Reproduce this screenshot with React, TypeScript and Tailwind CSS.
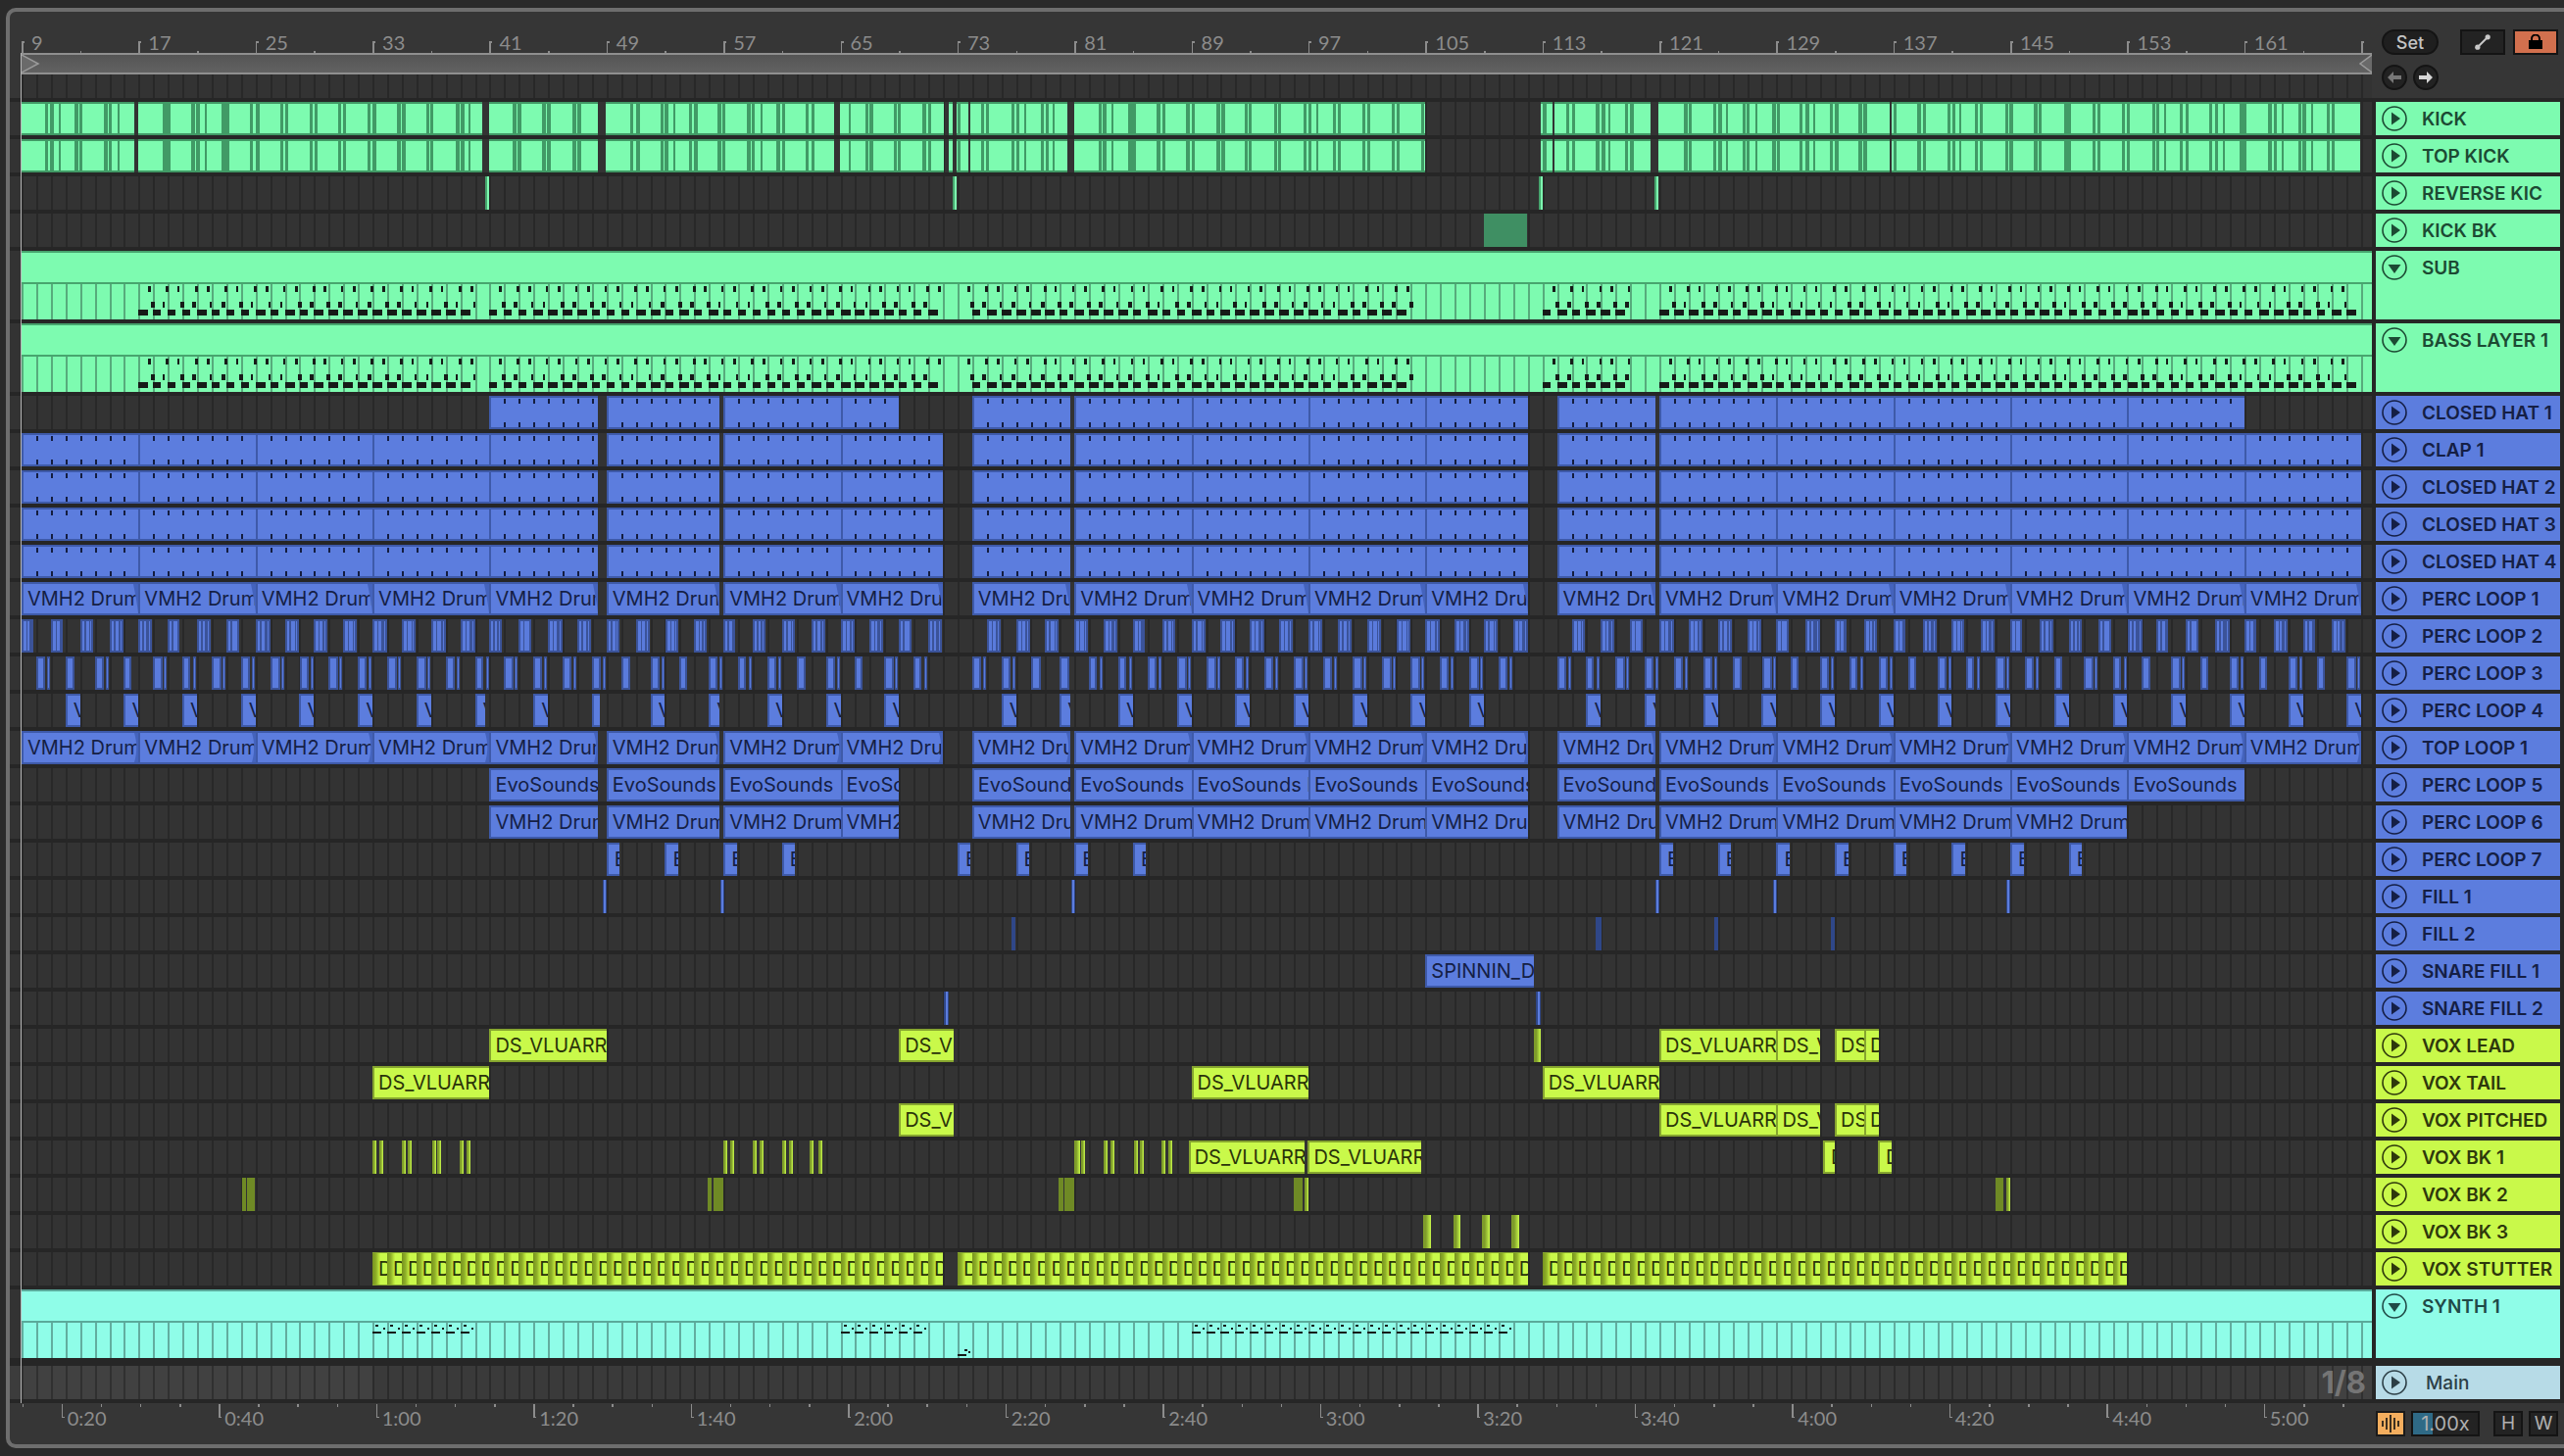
import React from "react";

const B = 14.92;
const K = (k: number) => 22 + k * B;
const rnd = (i: number) => Math.abs(Math.sin(i * 12.9898) * 43758.5453) % 1;
const range = (a: number, b: number, s = 1) => {
  const out: number[] = [];
  for (let i = a; i <= b; i += s) out.push(i);
  return out;
};
type Seg = [number, number];
const inSegs = (x: number, w: number, segs: Seg[], m = 0) =>
  segs.some(([a, b]) => x >= a + m && x + w <= b - m);

const TONES: Record<string, string> = {
  green: "bg-[#7dfbb0] border-y-2 border-[#419a66]",
  greenThin: "bg-[linear-gradient(90deg,#47a56e_50%,#7dfbb0_50%)]",
  greenDark: "bg-[#3f8f63]",
  blue: "bg-[#5c7dde] border-y-2 border-l-2 border-[#3e5aa9] text-[#151f45]",
  blueThin: "bg-[linear-gradient(90deg,#2f4788_30%,#5c7dde_30%,#5c7dde_70%,#2f4788_70%)]",
  blueDark: "bg-[#2f4788]",
  lime: "bg-[#c9f94a] border-y-2 border-l-2 border-[#86a52f] text-[#2a3309]",
  limeThin: "bg-[linear-gradient(90deg,#7e9c2a_35%,#c9f94a_100%)]",
  olive: "bg-[#6f8a25]",
  tile: "bg-[linear-gradient(90deg,#76921f_0%,#8fb028_25%,#b4dc38_42%,#c9f94a_55%,#c9f94a_100%)] border-y border-[#86a52f] text-[#2a3309]",
};

function Clip({
  a,
  b,
  tone,
  label,
  wedge,
  inset,
}: {
  a: number;
  b: number;
  tone: string;
  label?: string;
  wedge?: string;
  inset?: boolean;
}) {
  return (
    <div
      className={`absolute top-0 bottom-0 flex items-center overflow-hidden whitespace-nowrap font-['Inter',sans-serif] text-[20px] ${
        inset ? "pl-[6px]" : "pl-[4px]"
      } ${TONES[tone]}`}
      style={{ left: a - 22, width: b - a }}
    >
      {wedge && (
        <svg className="absolute right-0 top-0 h-full w-[6px]" viewBox="0 0 6 30" preserveAspectRatio="none">
          <path d={wedge === "curve" ? "M6 0 L2 0 C5 10 5 20 2 30 L6 30 Z" : "M6 0 L1 0 C3 10 5 20 6 30 Z"} fill="#4463bd" />
        </svg>
      )}
      {label}
    </div>
  );
}

function Overlay({ h, d, fill }: { h: number; d: string; fill: string }) {
  return (
    <svg className="absolute left-0 top-0" width={2398} height={h} shapeRendering="crispEdges">
      <path d={d} fill={fill} />
    </svg>
  );
}

const box = (x: number, y: number, w: number, h: number) => `M${(x - 22).toFixed(1)} ${y}h${w}v${h}h${-w}z`;

const KICK_SEGS: Seg[] = [
  [22, 137], [141, 492], [499, 610], [618, 850.6], [857, 963], [968.4, 972], [976, 988], [990, 1088.6],
  [1096, 1454], [1572, 1584], [1586, 1684], [1692, 1928], [1930, 2408],
];
const kickStripes = () => {
  let d = "";
  range(0, 160, 2).forEach((k) => {
    [24, 29].forEach((o, j) => {
      const w = 3 + (rnd(k * 3 + j) > 0.6 ? 1 : 0);
      const off = o + (rnd(k + j * 7) > 0.5 ? 1 : 0);
      const x = K(k) + off;
      if (inSegs(x, w, KICK_SEGS, 1)) d += box(x, 2, w, 30);
    });
    if (rnd(k + 211) > 0.7) {
      const x = K(k) + 8;
      if (inSegs(x, 2, KICK_SEGS, 1)) d += box(x, 2, 2, 30);
    }
  });
  return d;
};

function KickRow() {
  return (
    <>
      {KICK_SEGS.map(([a, b]) => (
        <Clip key={a} a={a} b={b} tone="green" />
      ))}
      <Overlay h={34} d={kickStripes()} fill="#419a66" />
    </>
  );
}

const NOTE_SEGS: Seg[] = [[141, 492], [498, 962], [977, 1448], [1572, 1670], [1692, 2406]];
const notesPath = () => {
  let d = "";
  range(8, 160).forEach((k) => {
    const x = K(k);
    const w3 = rnd(k) > 0.5 ? 10 : 8;
    if (inSegs(x, w3, NOTE_SEGS)) d += box(x, 26, w3, 6);
    if (k % 2 === 0) {
      const thick1 = rnd(k + 50) > 0.45 ? 3 : 2;
      const thick2 = rnd(k + 90) > 0.45 ? 3 : 2;
      if (inSegs(x + 10, thick1, NOTE_SEGS)) d += box(x + 10, 2, thick1, 6);
      if (inSegs(x + 28, thick2, NOTE_SEGS)) d += box(x + 28, 2, thick2, 6);
      const w4 = rnd(k + 130) > 0.35 ? 4 : 2;
      const w5 = rnd(k + 170) > 0.35 ? 4 : 2;
      if (inSegs(x + 13, w4, NOTE_SEGS)) d += box(x + 13, 18, w4, 6);
      if (inSegs(x + 25, w5, NOTE_SEGS)) d += box(x + 25, 18, w5, 6);
    }
  });
  return d;
};

const SYNTH_RANGES: Seg[] = [[380, 491], [856, 962], [1214, 1558]];
const synthPath = () => {
  let d = "";
  range(0, 160).forEach((k) => {
    const x = K(k);
    if (inSegs(x, 15, SYNTH_RANGES)) {
      d += box(x, 9, 9, 2);
      d += box(x + 3, 2, 3, 2);
      d += box(x + 11, 5, 2, 2);
    }
  });
  d += box(977, 32, 9, 2) + box(984, 27, 3, 2) + box(988, 29, 2, 2);
  return d;
};

const ALL_SEGS: Seg[] = [
  [0, 8], [8, 16], [16, 24], [24, 32], [32, 39.4], [40, 47.7], [48, 56], [56, 63], [65, 71.7], [72, 80], [80, 88],
  [88, 96], [96, 103], [105, 111.7], [112, 120], [120, 128], [128, 136], [136, 144], [144, 152], [152, 160],
];
const FROM32: Seg[] = ALL_SEGS.filter(([a]) => a >= 32).map(([a, b]) => (a === 56 ? [56, 60] : [a, b]) as Seg);

function tickPath(segs: Seg[]) {
  let d = "";
  const px: Seg[] = segs.map(([a, b]) => [K(a), K(b)]);
  range(0, 160).forEach((k) => {
    const x = K(k);
    if (inSegs(x, 2, px, 3)) d += box(x, 3, 2, 5) + box(x, 27, 2, 5);
  });
  return d;
}

function HatRow({ segs }: { segs: Seg[] }) {
  return (
    <>
      {segs.map(([a, b]) => (
        <Clip key={a} a={K(a)} b={K(b)} tone="blue" />
      ))}
      <Overlay h={34} d={tickPath(segs)} fill="#141d3f" />
    </>
  );
}

function TextRow({
  segs,
  label,
  wedge,
}: {
  segs: Seg[];
  label: (a: number) => string;
  wedge?: string;
}) {
  return (
    <>
      {segs.map(([a, b]) => (
        <Clip key={a} a={K(a)} b={K(b)} tone="blue" label={label(a)} wedge={wedge} />
      ))}
    </>
  );
}

const P2_STARTS = [...range(0, 62, 2), ...range(66, 102, 2), ...range(106, 158, 2)];
function Perc2() {
  let frame = "";
  let inner = "";
  P2_STARTS.forEach((k) => {
    const x = K(k);
    const w = 12 + Math.round(rnd(k) * 3);
    frame += box(x, 0, w, 34);
    inner += box(x + 2, 2, 2 + Math.round(rnd(k + 1)), 30);
    inner += box(x + 6, 2, 2 + Math.round(rnd(k + 2) * 2), 30);
    if (w > 12) inner += box(x + w - 3, 2, 1, 30);
  });
  return (
    <>
      <Overlay h={34} d={frame} fill="#3b5399" />
      <Overlay h={34} d={inner} fill="#5a7bdc" />
    </>
  );
}

const P3_STARTS = [...range(1, 61, 2), ...range(65, 101, 2), ...range(105, 159, 2)];
function Perc3() {
  let frame = "";
  let inner = "";
  P3_STARTS.forEach((k) => {
    const x = K(k);
    const w = 8 + Math.round(rnd(k + 3) * 2);
    frame += box(x, 0, w, 34);
    inner += box(x + 2, 2, w - 4, 30);
    if (rnd(k + 7) > 0.2) {
      frame += box(x + 11, 0, 3, 34);
      inner += box(x + 12, 2, 1, 30);
    }
  });
  return (
    <>
      <Overlay h={34} d={frame} fill="#3b5399" />
      <Overlay h={34} d={inner} fill="#5a7bdc" />
    </>
  );
}

const P4: Seg[] = [...range(3, 59, 4), ...range(67, 99, 4), ...range(107, 159, 4)].map((k) => {
  const end = k === 31 ? 31.7 : k === 39 ? 39.4 : k === 47 ? 47.7 : k === 71 ? 71.7 : k === 111 ? 111.7 : k + 1;
  return [k, end] as Seg;
});
const P7 = [40, 44, 48, 52, 64, 68, 72, 76, 112, 116, 120, 124, 128, 132, 136, 140];

const px = (list: Seg[], tone: string) => list.map(([a, b]) => <Clip key={a} a={a} b={b} tone={tone} />);

const VOXSET = (
  <>
    <Clip a={K(112)} b={K(120)} tone="lime" label="DS_VLUARR" />
    <Clip a={K(120)} b={K(123)} tone="lime" label="DS_V" />
    <Clip a={K(124)} b={K(126)} tone="lime" label="DS" />
    <Clip a={K(126)} b={K(127)} tone="lime" label="D" />
  </>
);

const BK1: Seg[] = [
  [380, 384], [386.6, 390], [410, 413], [416, 420], [440.6, 443], [446, 450], [469, 472], [476, 480],
  [738, 742], [744.6, 748], [768, 770], [775, 779], [798, 800], [804.5, 808], [826, 830], [834.6, 838],
  [1096, 1102], [1103, 1107], [1126, 1128.5], [1132.7, 1136], [1156.5, 1159], [1163, 1166], [1184.6, 1188], [1192.4, 1196],
];

const TILES = [...range(24, 62), ...range(64, 102), ...range(104, 143)];

type Row = { name: string; tone: "g" | "b" | "l" | "c"; content?: React.ReactNode; fold?: boolean };

const VMH = () => "VMH2 Drum";
const EVO = (a: number) => (a === 80 || a === 136 ? "EvoSounds P" : "EvoSounds");

const ROWS: Row[] = [
  { name: "KICK", tone: "g", content: <KickRow /> },
  { name: "TOP KICK", tone: "g", content: <KickRow /> },
  { name: "REVERSE KIC", tone: "g", content: px([[494.6, 498], [972, 976], [1570, 1572], [1688, 1692]], "greenThin") },
  { name: "KICK BK", tone: "g", content: px([[1514, 1558]], "greenDark") },
  { name: "SUB", tone: "g", fold: true },
  { name: "BASS LAYER 1", tone: "g", fold: true },
  { name: "CLOSED HAT 1", tone: "b", content: <HatRow segs={FROM32.filter(([a]) => a < 152)} /> },
  { name: "CLAP 1", tone: "b", content: <HatRow segs={ALL_SEGS} /> },
  { name: "CLOSED HAT 2", tone: "b", content: <HatRow segs={ALL_SEGS} /> },
  { name: "CLOSED HAT 3", tone: "b", content: <HatRow segs={ALL_SEGS} /> },
  { name: "CLOSED HAT 4", tone: "b", content: <HatRow segs={ALL_SEGS} /> },
  { name: "PERC LOOP 1", tone: "b", content: <TextRow segs={ALL_SEGS} label={VMH} wedge="corner" /> },
  { name: "PERC LOOP 2", tone: "b", content: <Perc2 /> },
  { name: "PERC LOOP 3", tone: "b", content: <Perc3 /> },
  {
    name: "PERC LOOP 4",
    tone: "b",
    content: P4.map(([a, b]) => <Clip key={a} a={K(a)} b={K(b)} tone="blue" label="V" inset />),
  },
  { name: "TOP LOOP 1", tone: "b", content: <TextRow segs={ALL_SEGS} label={VMH} wedge="curve" /> },
  { name: "PERC LOOP 5", tone: "b", content: <TextRow segs={FROM32.filter(([a]) => a < 152)} label={EVO} /> },
  { name: "PERC LOOP 6", tone: "b", content: <TextRow segs={FROM32.filter(([a]) => a < 144)} label={VMH} /> },
  {
    name: "PERC LOOP 7",
    tone: "b",
    content: P7.map((k) => <Clip key={k} a={K(k)} b={K(k) + 13.5} tone="blue" label="E" inset />),
  },
  { name: "FILL 1", tone: "b", content: [615, 735, 1093, 1689, 1809, 2047].map((x) => <Clip key={x} a={x} b={x + 3} tone="blueThin" />) },
  { name: "FILL 2", tone: "b", content: px([[1032, 1036], [1628, 1634], [1749, 1752], [1868, 1872]], "blueDark") },
  {
    name: "SNARE FILL 1",
    tone: "b",
    content: <Clip a={K(96)} b={1565} tone="blue" label="SPINNIN_D" />,
  },
  { name: "SNARE FILL 2", tone: "b", content: px([[962.6, 968], [1567, 1572]], "blueThin") },
  {
    name: "VOX LEAD",
    tone: "l",
    content: (
      <>
        <Clip a={K(32)} b={K(40)} tone="lime" label="DS_VLUARR" />
        <Clip a={K(60)} b={K(64) - 4} tone="lime" label="DS_V" />
        <Clip a={1564.5} b={1572} tone="limeThin" />
        {VOXSET}
      </>
    ),
  },
  {
    name: "VOX TAIL",
    tone: "l",
    content: [24, 80, 104].map((k) => <Clip key={k} a={K(k)} b={K(k + 8)} tone="lime" label="DS_VLUARR" />),
  },
  {
    name: "VOX PITCHED",
    tone: "l",
    content: (
      <>
        <Clip a={K(60)} b={K(64) - 4} tone="lime" label="DS_V" />
        {VOXSET}
      </>
    ),
  },
  {
    name: "VOX BK 1",
    tone: "l",
    content: (
      <>
        {px(BK1, "limeThin")}
        <Clip a={1212.7} b={1331.5} tone="lime" label="DS_VLUARR" />
        <Clip a={1334.4} b={1450} tone="lime" label="DS_VLUARR" />
        <Clip a={1860} b={1872} tone="lime" label="D" inset />
        <Clip a={1916} b={1930} tone="lime" label="D" inset />
      </>
    ),
  },
  {
    name: "VOX BK 2",
    tone: "l",
    content: (
      <>
        {px([[247, 250], [722, 726], [1080, 1085], [1320, 1328.6], [2036, 2044]], "olive")}
        {px([[252, 260], [728, 738], [1086, 1095.5]], "olive")}
        {px([[1330.5, 1334], [2047, 2050]], "limeThin")}
      </>
    ),
  },
  { name: "VOX BK 3", tone: "l", content: px([[1452, 1460], [1482.5, 1490], [1512, 1520], [1542, 1550]], "limeThin") },
  {
    name: "VOX STUTTER",
    tone: "l",
    content: TILES.map((k) => <Clip key={k} a={K(k)} b={K(k + 1)} tone="tile" label="D" inset />),
  },
  { name: "SYNTH 1", tone: "c", fold: true },
];

const PANEL: Record<string, string> = {
  g: "bg-[#7dfbb0] text-[#1c4a33]",
  b: "bg-[#5c7dde] text-[#151f45]",
  l: "bg-[#c9f94a] text-[#2e380c]",
  c: "bg-[#8ffde8] text-[#204a47]",
  m: "bg-[#b7dbe7] text-[#2d3f46]",
};

function RoundIcon({ down }: { down?: boolean }) {
  return (
    <svg width="26" height="26" viewBox="0 0 26 26" className="shrink-0">
      <circle cx="13" cy="13" r="12" fill="none" stroke="currentColor" strokeWidth="1.6" />
      {down ? <path d="M6.5 10h13L13 19z" fill="currentColor" /> : <path d="M10 6.5v13l9-6.5z" fill="currentColor" />}
    </svg>
  );
}

function Panel({ name, tone, fold, main }: { name: string; tone: string; fold?: boolean; main?: boolean }) {
  return (
    <div className={`flex w-[188px] shrink-0 items-start gap-[15px] overflow-hidden pl-[6px] pt-[4px] ${PANEL[tone]}`}>
      <RoundIcon down={fold} />
      <span
        className={`whitespace-nowrap font-['Inter',sans-serif] text-[19px] leading-[27px] ${
          main ? "ml-[4px] font-medium" : "font-semibold"
        }`}
      >
        {name}
      </span>
    </div>
  );
}

const GRID =
  "bg-[repeating-linear-gradient(90deg,#282828_0,#282828_2px,#333333_2px,#333333_14.92px)]";

function TrackRow({ row }: { row: Row }) {
  if (row.fold) {
    const cyan = row.tone === "c";
    return (
      <div className="flex h-[70px]">
        <div className="w-[12px] bg-[#333333]" />
        <div className="relative flex w-[2398px] flex-col">
          <div
            className={`h-[34px] border-t-2 border-b-2 ${
              cyan ? "border-[#5aa99a] bg-[#8ffde8]" : "border-[#47a56e] bg-[#7dfbb0]"
            }`}
          />
          <div
            className={`relative h-[36px] ${
              cyan
                ? "bg-[repeating-linear-gradient(90deg,#62ad9f_0,#62ad9f_2px,#8ffde8_2px,#8ffde8_14.92px)]"
                : "bg-[repeating-linear-gradient(90deg,#57ab7c_0,#57ab7c_2px,#7dfbb0_2px,#7dfbb0_14.92px)]"
            }`}
          >
            <Overlay h={36} d={cyan ? synthPath() : notesPath()} fill="#161b18" />
          </div>
        </div>
        <div className="w-[4px]" />
        <Panel name={row.name} tone={row.tone} fold />
      </div>
    );
  }
  return (
    <div className="flex h-[34px]">
      <div className="w-[12px] bg-[#333333]" />
      <div className={`relative w-[2398px] overflow-hidden ${GRID}`}>{row.content}</div>
      <div className="w-[4px]" />
      <Panel name={row.name} tone={row.tone} />
    </div>
  );
}

const BAR_LABELS = range(0, 19).map((i) => ({ k: i * 8, n: 9 + i * 8 }));
const TIMES = ["0:20","0:40","1:00","1:20","1:40","2:00","2:20","2:40","3:00","3:20","3:40","4:00","4:20","4:40","5:00"];

const RULER_TEXT = "font-['Lato',sans-serif] text-[20px] leading-[20px] text-[#8c8c8c]";

function TopRuler() {
  return (
    <div className="relative h-[42px] w-[2398px]">
      {BAR_LABELS.map(({ k, n }) => (
        <div key={k} className="absolute top-[23px]" style={{ left: k * B }}>
          <span className={`absolute left-[10px] top-0 -translate-y-[2px] ${RULER_TEXT}`}>{n}</span>
        </div>
      ))}
      {range(0, 20).map((i) => (
        <div
          key={i}
          className="absolute bottom-0 h-[12px] w-[1.5px] bg-[#8c8c8c]"
          style={{ left: i * 8 * B }}
        >
          <div className="absolute left-0 top-0 h-[1.5px] w-[3px] bg-[#8c8c8c]" />
        </div>
      ))}
      {range(0, 19).map((i) => (
        <div key={i} className="absolute bottom-0 h-[2px] w-[1.5px] bg-[#8c8c8c]" style={{ left: (i * 8 + 4) * B }} />
      ))}
    </div>
  );
}

function BottomRuler() {
  return (
    <div className="relative h-[42px] w-[2410px]">
      {range(0, 59).map((i) => (
        <div key={i} className="absolute top-[1px] h-[3px] w-[1.5px] bg-[#8c8c8c]" style={{ left: 12.5 + i * 40.13 }} />
      ))}
      {TIMES.map((t, i) => (
        <div key={t} className="absolute top-[1px] h-[14px] w-[1.5px] bg-[#8c8c8c]" style={{ left: 52.7 + i * 160.5 }}>
          <div className="absolute bottom-0 left-0 h-[1.5px] w-[3px] bg-[#8c8c8c]" />
          <span className={`absolute left-[6px] top-[4px] ${RULER_TEXT}`}>{t}</span>
        </div>
      ))}
    </div>
  );
}

export default function App() {
  return (
    <div className="relative h-[1486px] w-[2616px] overflow-hidden bg-[#2a2a2a]">
      <div className="absolute left-[6px] top-[8px] flex h-[1470px] w-[2610px] flex-col overflow-hidden rounded-tl-[10px] rounded-bl-[10px] border-y-4 border-l-4 border-[#6e6e6e] bg-[#363636]">
        {/* header */}
        <div className="flex h-[88px] shrink-0">
          <div className="w-[2410px] pl-[12px]">
            <TopRuler />
            <div className="relative h-[22px] w-[2398px] border-y-2 border-[#8f8f8f] bg-[linear-gradient(180deg,#555555,#626262)]">
              <svg className="absolute left-0 top-0" width="2398" height="18">
                <path d="M0 0L17 9L0 18" fill="#6a6a6a" stroke="#9a9a9a" strokeWidth="1.5" />
                <path d="M2398 0L2386 9L2398 18" fill="#6a6a6a" stroke="#9a9a9a" strokeWidth="1.5" />
              </svg>
            </div>
            <div className={`h-[24px] w-[2398px] ${GRID}`} />
          </div>
          <div className="pl-[10px] pt-[18px]">
            <div className="flex h-[26px] items-center">
              <div className="flex h-[26px] w-[58px] items-center justify-center rounded-full border-2 border-[#141414] bg-[#1f1f1f] font-['Inter',sans-serif] text-[18px] font-medium text-[#c4c4c4]">
                Set
              </div>
              <div className="ml-[22px] flex h-[26px] w-[46px] items-center justify-center border-2 border-[#141414] bg-[#232323]">
                <svg width="18" height="18" viewBox="0 0 18 18">
                  <path d="M4 14L14 4" stroke="#c8c8c8" strokeWidth="2" />
                  <circle cx="3.8" cy="14.2" r="2.6" fill="#c8c8c8" />
                  <circle cx="14.2" cy="3.8" r="2.6" fill="#c8c8c8" />
                </svg>
              </div>
              <div className="ml-[8px] flex h-[26px] w-[46px] items-center justify-center border-2 border-[#141414] bg-[#d2704e]">
                <svg width="16" height="16" viewBox="0 0 16 16">
                  <rect x="1" y="6" width="14" height="9" fill="#000" />
                  <path d="M4 7V4.5a4 4 0 0 1 8 0V7" fill="none" stroke="#000" strokeWidth="2" />
                </svg>
              </div>
            </div>
            <div className="mt-[10px] flex gap-[6px]">
              <div className="flex h-[26px] w-[26px] items-center justify-center rounded-full border-2 border-[#141414] bg-[#222222]">
                <svg width="14" height="12" viewBox="0 0 14 12">
                  <path d="M0 6L6 0V4H14V8H6V12Z" fill="#777777" />
                </svg>
              </div>
              <div className="flex h-[26px] w-[26px] items-center justify-center rounded-full border-2 border-[#141414] bg-[#222222]">
                <svg width="14" height="12" viewBox="0 0 14 12">
                  <path d="M14 6L8 0V4H0V8H8V12Z" fill="#d6d6d6" />
                </svg>
              </div>
            </div>
          </div>
        </div>

        {/* tracks */}
        <div className="flex shrink-0 flex-col gap-[4px] bg-[#262626] pt-[4px]">
          {ROWS.map((r) => (
            <TrackRow key={r.name} row={r} />
          ))}
        </div>

        {/* main */}
        <div className="flex shrink-0 flex-col bg-[#262626] pb-[4px] pt-[8px]">
          <div className="flex h-[34px]">
            <div className="w-[12px] bg-[#3c3c3c]" />
            <div className="relative w-[2398px] bg-[repeating-linear-gradient(90deg,#303030_0,#303030_2px,#414141_2px,#414141_14.92px)]">
              <div className="absolute bottom-0 left-[358px] top-0 w-[1970px] bg-black/10" />
              <span className="absolute right-[6px] top-[-2px] font-['Inter',sans-serif] text-[31px] font-bold leading-[38px] text-[#757575]">
                1/8
              </span>
            </div>
            <div className="w-[4px]" />
            <Panel name="Main" tone="m" main />
          </div>
        </div>

        {/* bottom */}
        <div className="flex h-[42px] shrink-0">
          <BottomRuler />
          <div className="flex pl-[4px] pt-[8px]">
            <div className="flex h-[26px] w-[30px] items-center justify-center border-2 border-[#1a1a1a] bg-[#f4ae5e]">
              <svg width="20" height="18" viewBox="0 0 20 18">
                <path d="M2 6v6M6 3v12M10 0v18M14 3v12M18 6v6" stroke="#111" strokeWidth="1.6" />
              </svg>
            </div>
            <div className="relative ml-[6px] flex h-[26px] w-[70px] items-center justify-center border-2 border-[#141414] bg-[#232323] font-['Inter',sans-serif] text-[20px] text-[#b0b0b0]">
              <div className="absolute bottom-0 left-0 top-0 w-[20px] bg-[#2f6a86]" />
              <span className="relative">1.00x</span>
            </div>
            <div className="ml-[14px] flex h-[26px] w-[30px] items-center justify-center border-2 border-[#141414] bg-[#232323] font-['Inter',sans-serif] text-[19px] text-[#b0b0b0]">
              H
            </div>
            <div className="ml-[6px] flex h-[26px] w-[30px] items-center justify-center border-2 border-[#141414] bg-[#232323] font-['Inter',sans-serif] text-[19px] text-[#b0b0b0]">
              W
            </div>
          </div>
        </div>
      </div>
      <div className="absolute left-[21px] top-[54px] h-[1378px] w-[1px] bg-[#b5b5b5]" />
    </div>
  );
}
